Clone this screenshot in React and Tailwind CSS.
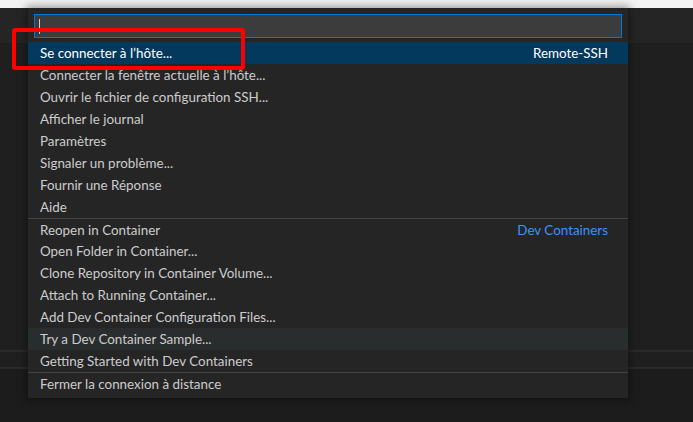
import React from 'react';

const groups = [
  {
    label: 'Remote-SSH',
    items: [
      'Se connecter à l’hôte...',
      'Connecter la fenêtre actuelle à l’hôte...',
      'Ouvrir le fichier de configuration SSH...',
      'Afficher le journal',
      'Paramètres',
      'Signaler un problème...',
      'Fournir une Réponse',
      'Aide',
    ],
  },
  {
    label: 'Dev Containers',
    items: [
      'Reopen in Container',
      'Open Folder in Container...',
      'Clone Repository in Container Volume...',
      'Attach to Running Container...',
      'Add Dev Container Configuration Files...',
      'Try a Dev Container Sample...',
      'Getting Started with Dev Containers',
    ],
  },
  {
    label: null,
    items: ['Fermer la connexion à distance'],
  },
];

function Row({ text, label, selected, hover, separator }) {
  let bg = '';
  if (selected) bg = 'bg-[#04395e] text-white';
  else if (hover) bg = 'bg-[#2a2d2e] text-[#cccccc]';
  else bg = 'text-[#cccccc]';

  return (
    <div
      className={`flex h-[22px] items-center justify-between pl-3 pr-5 pt-px ${
        separator ? 'border-t border-[#454545]' : ''
      } ${bg}`}
    >
      <span>{text}</span>
      {label && (
        <span className={selected ? 'text-white' : 'text-[#3794ff]'}>{label}</span>
      )}
    </div>
  );
}

export default function App() {
  return (
    <div
      className="relative flex h-[422px] w-[693px] flex-col overflow-hidden bg-[#1e1e1e]"
      style={{ fontFamily: 'Lato, "Noto Sans", sans-serif' }}
    >
      <div className="h-2 bg-[#f3f3f3]" />
      <div className="h-[35px] bg-[#252526]" />
      <div className="h-[307px] bg-[#1f1f1f]" />
      <div className="h-[19px] border-y-2 border-[#2a2a2a] bg-[#1f1f1f]" />
      <div className="flex-1 bg-[#1c1c1c]" />

      {/* command palette */}
      <div className="absolute left-[28px] top-2 w-[600px] bg-[#252526] pb-1 text-[13.4px] shadow-[0_0_8px_2px_rgba(0,0,0,0.36)]">
        <div className="px-[6px] pb-1 pt-[6px]">
          <div className="flex h-6 items-center border border-[#0078d4] bg-[#3c3c3c] pl-1">
            <div className="h-[15px] w-px bg-[#cccccc]" />
          </div>
        </div>
        {groups.map((g, gi) => (
          <div key={gi}>
            {g.items.map((item, i) => (
              <Row
                key={item}
                text={item}
                label={i === 0 ? g.label : null}
                selected={gi === 0 && i === 0}
                hover={item === 'Try a Dev Container Sample...'}
                separator={gi > 0 && i === 0}
              />
            ))}
          </div>
        ))}
      </div>

      {/* annotation */}
      <div className="absolute left-[12px] top-[28px] h-[42px] w-[233px] rounded-[3px] border-4 border-[#ff0000]" />
    </div>
  );
}
